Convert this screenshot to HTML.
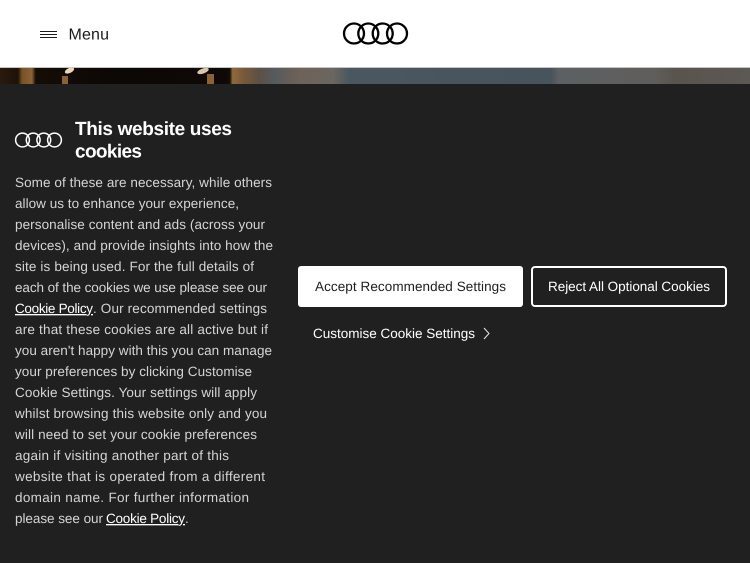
<!DOCTYPE html>
<html lang="en"><head><meta charset="utf-8"><title>Cookies</title>
<style>
html,body{margin:0;padding:0;width:750px;height:563px;overflow:hidden;background:#202020}
svg{display:block;position:absolute;left:0;top:0}
text{font-family:"Liberation Sans",sans-serif;text-rendering:geometricPrecision}
.b{font-size:13.5px;fill:#d4d4d4}
.l{font-size:13.5px;fill:#fff;text-decoration:underline}
</style></head><body>
<svg width="750" height="563" viewBox="0 0 750 563" xmlns="http://www.w3.org/2000/svg">
<defs>
<linearGradient id="g" x1="0" x2="1" y1="0" y2="0">
<stop offset="0" stop-color="#2a1a0e"/>
<stop offset=".048" stop-color="#1e120a"/>
<stop offset=".059" stop-color="#7a5228"/>
<stop offset=".085" stop-color="#8a6236"/>
<stop offset=".095" stop-color="#160c06"/>
<stop offset=".3" stop-color="#0c0805"/>
<stop offset=".6" stop-color="#0e0906"/>
<stop offset=".613" stop-color="#140c07"/>
<stop offset=".62" stop-color="#8f6a3c"/>
<stop offset=".648" stop-color="#7a5a38"/>
<stop offset=".69" stop-color="#5c5046"/>
<stop offset=".73" stop-color="#565a5c"/>
<stop offset=".8" stop-color="#6f6259"/>
<stop offset=".89" stop-color="#6a6660"/>
<stop offset=".93" stop-color="#4b5760"/>
<stop offset="1" stop-color="#4a5660"/>
</linearGradient>
<linearGradient id="g2" x1="0" x2="1" y1="0" y2="0">
<stop offset="0" stop-color="#4a5660"/>
<stop offset=".47" stop-color="#48545c"/>
<stop offset=".49" stop-color="#5c6062"/>
<stop offset=".74" stop-color="#605e5c"/>
<stop offset=".8" stop-color="#5a544e"/>
<stop offset="1" stop-color="#5c5854"/>
</linearGradient>
</defs>
<rect width="750" height="563" fill="#202020"/>
<rect width="750" height="67" fill="#fff"/>
<rect y="67" width="750" height="1" fill="#c4c4c4"/>
<rect y="68" width="375" height="16" fill="url(#g)"/>
<rect x="375" y="68" width="375" height="16" fill="url(#g2)"/>
<rect x="62" y="76" width="6" height="8" fill="#8a6236"/>
<ellipse cx="69.500" cy="70.500" rx="5" ry="2.500" fill="#e8d8b8" transform="rotate(-25 69.500 70.500)"/>
<ellipse cx="203" cy="71" rx="6" ry="2.500" fill="#d8c8a8" transform="rotate(-20 203 71)"/>
<rect x="207" y="74" width="7" height="10" fill="#8a6236"/>
<rect x="0" y="84" width="750" height="479" fill="#202020"/>

<!-- Menu icon -->
<path d="M40 31.500h17M40 34.500h17M40 37.500h17" stroke="#1a1a1a" stroke-width="1" fill="none"/>
<text x="68.500" y="39.500" font-size="16" fill="#1a1a1a" textLength="40.500" lengthAdjust="spacing">Menu</text>

<!-- Audi rings header -->
<g fill="none" stroke="#000" stroke-width="2.300">
<circle cx="354" cy="33.500" r="10"/><circle cx="368.300" cy="33.500" r="10"/><circle cx="382.700" cy="33.500" r="10"/><circle cx="397" cy="33.500" r="10"/>
</g>

<!-- Audi rings small -->
<g fill="none" stroke="#fff" stroke-width="1.500">
<circle cx="22.500" cy="140" r="6.900"/><circle cx="33.200" cy="140" r="6.900"/><circle cx="43.800" cy="140" r="6.900"/><circle cx="54.500" cy="140" r="6.900"/>
</g>

<text x="75" y="135" font-size="19" font-weight="700" fill="#fff" textLength="157" lengthAdjust="spacing">This website uses</text>
<text x="75" y="157.500" font-size="19" font-weight="700" fill="#fff" textLength="67" lengthAdjust="spacing">cookies</text>

<text class="b" x="15" y="187" textLength="257" lengthAdjust="spacing">Some of these are necessary, while others</text>
<text class="b" x="15" y="208" textLength="224" lengthAdjust="spacing">allow us to enhance your experience,</text>
<text class="b" x="15" y="229" textLength="250" lengthAdjust="spacing">personalise content and ads (across your</text>
<text class="b" x="15" y="250" textLength="258" lengthAdjust="spacing">devices), and provide insights into how the</text>
<text class="b" x="15" y="271" textLength="239" lengthAdjust="spacing">site is being used. For the full details of</text>
<text class="b" x="15" y="292" textLength="252" lengthAdjust="spacing">each of the cookies we use please see our</text>
<text class="l" x="15" y="313" textLength="78" lengthAdjust="spacing">Cookie Policy</text>
<text class="b" x="93" y="313" textLength="174" lengthAdjust="spacing">. Our recommended settings</text>
<text class="b" x="15" y="334" textLength="253" lengthAdjust="spacing">are that these cookies are all active but if</text>
<text class="b" x="15" y="355" textLength="257" lengthAdjust="spacing">you aren't happy with this you can manage</text>
<text class="b" x="15" y="376" textLength="237" lengthAdjust="spacing">your preferences by clicking Customise</text>
<text class="b" x="15" y="397" textLength="242" lengthAdjust="spacing">Cookie Settings. Your settings will apply</text>
<text class="b" x="15" y="418" textLength="252" lengthAdjust="spacing">whilst browsing this website only and you</text>
<text class="b" x="15" y="439" textLength="242" lengthAdjust="spacing">will need to set your cookie preferences</text>
<text class="b" x="15" y="460" textLength="214" lengthAdjust="spacing">again if visiting another part of this</text>
<text class="b" x="15" y="481" textLength="250" lengthAdjust="spacing">website that is operated from a different</text>
<text class="b" x="15" y="502" textLength="234" lengthAdjust="spacing">domain name. For further information</text>
<text class="b" x="15" y="523" textLength="88" lengthAdjust="spacing">please see our</text>
<text class="l" x="106" y="523" textLength="79" lengthAdjust="spacing">Cookie Policy</text>
<text class="b" x="185" y="523">.</text>

<rect x="298" y="266" width="225" height="41" rx="3" fill="#fff"/>
<text x="315" y="291" font-size="13.500" fill="#202020" textLength="191" lengthAdjust="spacing">Accept Recommended Settings</text>
<rect x="532" y="267" width="194" height="39" rx="3" fill="#202020" stroke="#fff" stroke-width="2"/>
<text x="548" y="291" font-size="13.500" fill="#fff" textLength="162" lengthAdjust="spacing">Reject All Optional Cookies</text>
<text x="313" y="338" font-size="13.500" fill="#fff" textLength="162" lengthAdjust="spacing">Customise Cookie Settings</text>
<path d="M484 328l5 5.500-5 5.500" fill="none" stroke="#e8e8e8" stroke-width="1"/>
</svg>
</body></html>
